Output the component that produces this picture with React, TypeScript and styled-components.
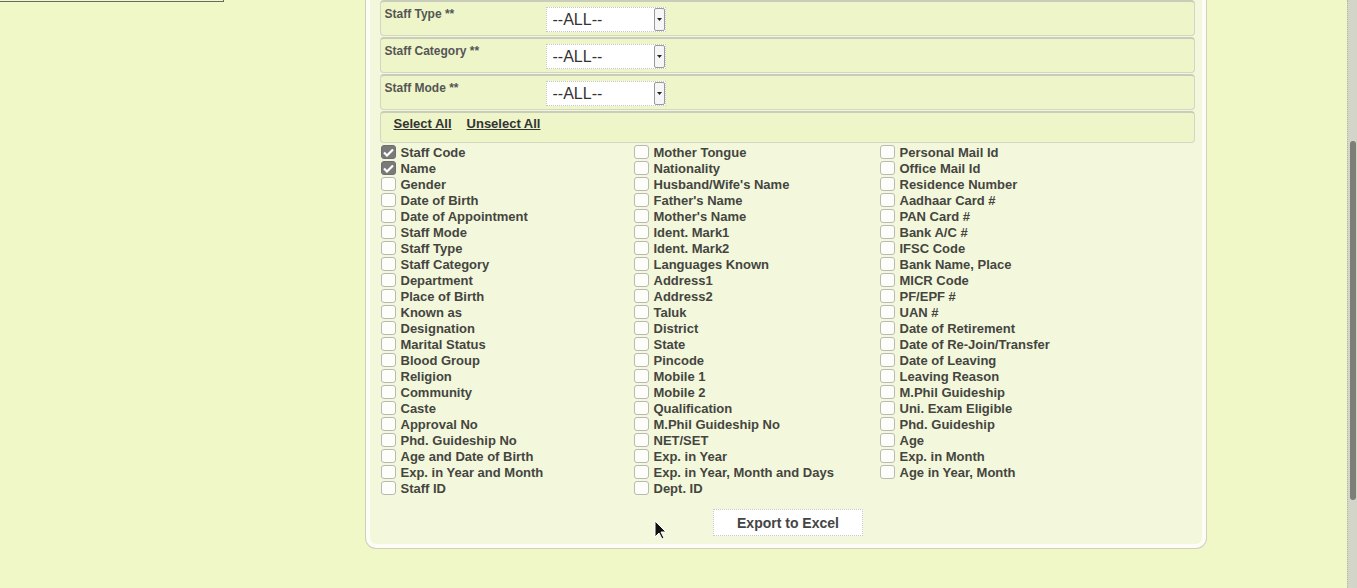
import React from "react";
import styled, { createGlobalStyle } from "styled-components";

const Global = createGlobalStyle`
  html, body {
    margin: 0;
    padding: 0;
    background: #f1f8c8;
    font-family: "Liberation Sans", Arial, sans-serif;
  }
`;

const filters = ["Staff Type **", "Staff Category **", "Staff Mode **"];

const col1 = [
  "Staff Code", "Name", "Gender", "Date of Birth", "Date of Appointment", "Staff Mode",
  "Staff Type", "Staff Category", "Department", "Place of Birth", "Known as", "Designation",
  "Marital Status", "Blood Group", "Religion", "Community", "Caste", "Approval No",
  "Phd. Guideship No", "Age and Date of Birth", "Exp. in Year and Month", "Staff ID",
];
const col2 = [
  "Mother Tongue", "Nationality", "Husband/Wife's Name", "Father's Name", "Mother's Name",
  "Ident. Mark1", "Ident. Mark2", "Languages Known", "Address1", "Address2", "Taluk",
  "District", "State", "Pincode", "Mobile 1", "Mobile 2", "Qualification",
  "M.Phil Guideship No", "NET/SET", "Exp. in Year", "Exp. in Year, Month and Days", "Dept. ID",
];
const col3 = [
  "Personal Mail Id", "Office Mail Id", "Residence Number", "Aadhaar Card #", "PAN Card #",
  "Bank A/C #", "IFSC Code", "Bank Name, Place", "MICR Code", "PF/EPF #", "UAN #",
  "Date of Retirement", "Date of Re-Join/Transfer", "Date of Leaving", "Leaving Reason",
  "M.Phil Guideship", "Uni. Exam Eligible", "Phd. Guideship", "Age", "Exp. in Month",
  "Age in Year, Month",
];

const checked = ["Staff Code", "Name"];

const App = () => {
  return (
    <Page>
      <Global />
      <Sidebar>
        <SideBox />
      </Sidebar>
      <Main>
        <Panel>
          {filters.map((f) => (
            <FilterRow key={f}>
              <FilterLabel>{f}</FilterLabel>
              <Select>
                <SelectText>--ALL--</SelectText>
                <SelectArrow>
                  <svg width="5" height="3" viewBox="0 0 5 3">
                    <path d="M0 0h5L2.5 3z" fill="#222" />
                  </svg>
                </SelectArrow>
              </Select>
            </FilterRow>
          ))}
          <LinkRow>
            <TextLink>Select All</TextLink>
            <TextLink>Unselect All</TextLink>
          </LinkRow>
          <Fields>
            {[col1, col2, col3].map((col, i) => (
              <Column key={i}>
                {col.map((name) => (
                  <Field key={name}>
                    <Box $on={checked.includes(name)}>
                      {checked.includes(name) && (
                        <svg width="11" height="9" viewBox="0 0 11 9">
                          <path d="M1 4.5l3 3L10 1.5" stroke="#fff" strokeWidth="2.2" fill="none" />
                        </svg>
                      )}
                    </Box>
                    {name}
                  </Field>
                ))}
              </Column>
            ))}
          </Fields>
          <Actions>
            <ExportButton>Export to Excel</ExportButton>
          </Actions>
        </Panel>
      </Main>
      <Scrollbar>
        <Thumb />
      </Scrollbar>
      <Cursor width="13" height="20" viewBox="0 0 13 20">
        <path d="M1 1v16l4-4 3 6 2-1-3-6h5z" fill="#111" stroke="#fff" strokeWidth="1" />
      </Cursor>
    </Page>
  );
};

export default App;

const Page = styled.div`
  display: flex;
  height: 588px;
  overflow: hidden;
  position: relative;
`;

const Sidebar = styled.div`
  width: 224px;
  flex-shrink: 0;
`;

const SideBox = styled.div`
  height: 1px;
  border-bottom: 1px solid #6a6a64;
  border-right: 1px solid #6a6a64;
`;

const Main = styled.div`
  flex: 1;
  display: flex;
  justify-content: center;
  align-items: flex-start;
`;

const Panel = styled.div`
  width: 840px;
  padding: 0 7px 8px 10px;
  box-sizing: border-box;
  background: #f3f8dc;
  border: 4px solid #fdfdf6;
  border-top: none;
  border-radius: 0 0 10px 10px;
  box-shadow: 0 0 0 1px #cfd1bd;
`;

const FilterRow = styled.div`
  display: flex;
  align-items: flex-start;
  height: 36px;
  box-sizing: border-box;
  margin-bottom: 1px;
  padding: 5px 0 0 4px;
  background: #eef5c9;
  border: 1px solid #d3d6c0;
  border-top: 2px solid #c9cbbb;
  border-radius: 4px;
`;

const FilterLabel = styled.div`
  width: 161px;
  font-size: 12px;
  line-height: 14px;
  font-weight: bold;
  color: #555;
`;

const Select = styled.div`
  display: flex;
  width: 120px;
  height: 25px;
  box-sizing: border-box;
  background: #fff;
  border: 1px dotted #c6c6c6;
`;

const SelectText = styled.div`
  flex: 1;
  padding-left: 6px;
  font-size: 16px;
  line-height: 23px;
  color: #333;
`;

const SelectArrow = styled.div`
  width: 11px;
  box-sizing: border-box;
  display: flex;
  align-items: center;
  justify-content: center;
  border: 1px solid #9a9a9a;
  border-radius: 2px;
  background: #f6f6f6;
`;

const LinkRow = styled.div`
  display: flex;
  gap: 15px;
  height: 32px;
  box-sizing: border-box;
  padding: 3px 0 0 13px;
  background: #eef5c9;
  border: 1px solid #d3d6c0;
  border-top: 2px solid #c9cbbb;
  border-radius: 4px;
`;

const TextLink = styled.a`
  font-size: 13px;
  font-weight: bold;
  color: #333;
  text-decoration: underline;
  line-height: 16px;
`;

const Fields = styled.div`
  display: grid;
  grid-template-columns: 253px 246px 1fr;
  margin-top: 1px;
  padding-left: 1px;
`;

const Column = styled.div`
  display: flex;
  flex-direction: column;
`;

const Field = styled.label`
  display: flex;
  align-items: center;
  gap: 5px;
  height: 16px;
  font-size: 13px;
  font-weight: bold;
  color: #454540;
  white-space: nowrap;
`;

const Box = styled.span<{ $on?: boolean }>`
  width: 15px;
  height: 14px;
  box-sizing: border-box;
  display: flex;
  align-items: center;
  justify-content: center;
  border-radius: 3px;
  border: 1px solid ${(p) => (p.$on ? "#6e6e6e" : "#b9b9b0")};
  background: ${(p) => (p.$on ? "#7a7a7a" : "#fdfdf9")};
`;

const Actions = styled.div`
  display: flex;
  justify-content: center;
  margin-top: 13px;
  padding-left: 2px;
`;

const ExportButton = styled.button`
  width: 150px;
  height: 27px;
  background: #fff;
  border: 1px dotted #c8c8c8;
  font-family: "Liberation Sans", Arial, sans-serif;
  font-size: 14px;
  font-weight: bold;
  color: #444;
  padding: 0;
`;

const Scrollbar = styled.div`
  width: 10px;
  flex-shrink: 0;
  background: #d4d5c9;
  border-left: 1px dotted #b8b9ad;
  box-sizing: border-box;
  padding-top: 141px;
  display: flex;
  justify-content: center;
`;

const Thumb = styled.div`
  width: 6px;
  height: 359px;
  border-radius: 3px;
  background: #7e7e78;
`;

const Cursor = styled.svg`
  position: absolute;
  left: 654px;
  top: 520px;
`;
